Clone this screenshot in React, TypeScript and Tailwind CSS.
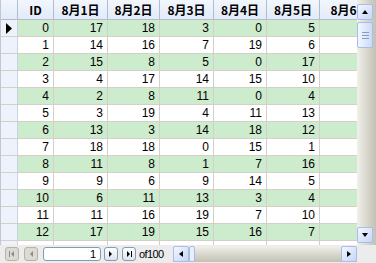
const cols = [
  { label: "ID", w: 36 },
  { label: "8月1日", w: 54 },
  { label: "8月2日", w: 52 },
  { label: "8月3日", w: 54 },
  { label: "8月4日", w: 53 },
  { label: "8月5日", w: 53 },
  { label: "8月6日", w: 60 },
];

const rows: (number | string)[][] = [
  [0, 17, 18, 3, 0, 5],
  [1, 14, 16, 7, 19, 6],
  [2, 15, 8, 5, 0, 17],
  [3, 4, 17, 14, 15, 10],
  [4, 2, 8, 11, 0, 4],
  [5, 3, 19, 4, 11, 13],
  [6, 13, 3, 14, 18, 12],
  [7, 18, 18, 0, 15, 1],
  [8, 11, 8, 1, 7, 16],
  [9, 9, 6, 9, 14, 5],
  [10, 6, 11, 13, 3, 4],
  [11, 11, 16, 19, 7, 10],
  [12, 17, 19, 15, 16, 7],
  ["", "", "", "", "", ""],
];

function Arrow({ dir, color = "#000" }: { dir: "up" | "down" | "left" | "right"; color?: string }) {
  const pts = {
    up: "1,6 4,2 7,6",
    down: "1,2 4,6 7,2",
    left: "6,1 2,4 6,7",
    right: "2,1 6,4 2,7",
  }[dir];
  return (
    <svg width="8" height="8" viewBox="0 0 8 8">
      <polygon points={pts} fill={color} />
    </svg>
  );
}

function ScrollBtn({ dir }: { dir: "up" | "down" | "left" | "right" }) {
  return (
    <div className="w-[16px] h-[16px] shrink-0 rounded-[2px] border border-[#a9bde6] bg-gradient-to-br from-[#f3f7ff] to-[#c6d6f7] flex items-center justify-center">
      <Arrow dir={dir} />
    </div>
  );
}

function NavBtn({ kind, enabled, className = "" }: { kind: "first" | "prev" | "next" | "last"; enabled: boolean; className?: string }) {
  const c = enabled ? "#000" : "#8c8c8c";
  return (
    <div
      className={
        "w-[14px] h-[14px] shrink-0 rounded-[3px] border flex items-center justify-center " +
        (enabled ? "border-[#7f9db9] bg-gradient-to-b from-white to-[#dde4ee] " : "border-[#b5b2a8] bg-[#dcdad2] ") +
        className
      }
    >
      <svg width="8" height="8" viewBox="0 0 8 8">
        {kind === "first" && (
          <>
            <rect x="1" y="1" width="1" height="6" fill={c} />
            <polygon points="6,1 3,4 6,7" fill={c} />
          </>
        )}
        {kind === "prev" && <polygon points="6,1 3,4 6,7" fill={c} />}
        {kind === "next" && <polygon points="2,1 5,4 2,7" fill={c} />}
        {kind === "last" && (
          <>
            <polygon points="2,1 5,4 2,7" fill={c} />
            <rect x="6" y="1" width="1" height="6" fill={c} />
          </>
        )}
      </svg>
    </div>
  );
}

export default function App() {
  return (
    <div className="w-[376px] h-[263px] bg-[#ececec] flex flex-col overflow-hidden font-['Liberation_Sans',sans-serif] text-[12px] text-black">
      <div className="h-[245px] flex">
        {/* Grid */}
        <div className="w-[357px] h-full overflow-hidden bg-white border-l border-[#c0c8d8]">
          <div className="flex h-[20px] bg-gradient-to-b from-[#f2f6fd] to-[#e2ebf9] border-b border-[#b3bccc] font-['Noto_Sans_CJK_JP',sans-serif] font-bold text-[12px]">
            <div className="w-[17px] shrink-0 border-r border-[#b3bccc]" />
            {cols.map((c) => (
              <div
                key={c.label}
                style={{ width: c.w }}
                className="shrink-0 border-r border-[#b3bccc] flex items-center justify-center whitespace-nowrap overflow-hidden leading-none"
              >
                {c.label}
              </div>
            ))}
          </div>
          {rows.map((r, i) => (
            <div key={i} className={"flex h-[17px] border-b border-[#d4d0c8] " + (i % 2 === 0 ? "bg-[#cdebcd]" : "bg-white")}>
              <div className="w-[17px] shrink-0 bg-[#edf2fb] border-r border-[#c8d2e4] flex items-center justify-center">
                {i === 0 && (
                  <svg width="7" height="11" viewBox="0 0 7 11">
                    <polygon points="0,0 6,5.5 0,11" fill="#000" />
                  </svg>
                )}
              </div>
              {cols.map((c, j) => (
                <div
                  key={j}
                  style={{ width: c.w }}
                  className="shrink-0 border-r border-[#d4d0c8] flex items-center justify-end pr-[4px] leading-none"
                >
                  {j < 6 ? r[j] : ""}
                </div>
              ))}
            </div>
          ))}
        </div>
        {/* Vertical scrollbar */}
        <div className="w-[19px] h-full flex flex-col items-start pt-[4px] pb-[2px] bg-gradient-to-r from-[#f1f0ea] to-[#c3c1b4]">
          <ScrollBtn dir="up" />
          <div className="w-[16px] h-[26px] mt-[2px] rounded-[2px] border border-[#a9bde6] bg-gradient-to-r from-[#f3f7ff] to-[#cbdaf8] flex flex-col items-center justify-center gap-[2px]">
            <div className="w-[7px] h-[1px] bg-[#8a9cc4]" />
            <div className="w-[7px] h-[1px] bg-[#8a9cc4]" />
            <div className="w-[7px] h-[1px] bg-[#8a9cc4]" />
          </div>
          <div className="flex-1" />
          <ScrollBtn dir="down" />
        </div>
      </div>
      {/* Navigator */}
      <div className="h-[18px] flex items-center pl-[5px]">
        <NavBtn kind="first" enabled={false} />
        <NavBtn kind="prev" enabled={false} className="ml-[5px]" />
        <div className="ml-[5px] w-[58px] h-[14px] bg-white border border-[#7f9db9] rounded-[3px] flex items-center justify-end pr-[4px] text-[11px] leading-[12px]">
          1
        </div>
        <NavBtn kind="next" enabled={true} className="ml-[3px]" />
        <NavBtn kind="last" enabled={true} className="ml-[4px]" />
        <span className="ml-[3px] w-[30px] text-[11px] leading-[12px] tracking-[-0.6px] whitespace-nowrap">of100</span>
        <div className="ml-[4px] w-[184px] h-[16px] flex items-center bg-gradient-to-b from-[#f1f0ea] to-[#c3c1b4]">
          <ScrollBtn dir="left" />
          <div className="w-[6px] h-[16px] rounded-[2px] border border-[#a9bde6] bg-[#e8eefc]" />
          <div className="flex-1" />
          <ScrollBtn dir="right" />
        </div>
      </div>
    </div>
  );
}
